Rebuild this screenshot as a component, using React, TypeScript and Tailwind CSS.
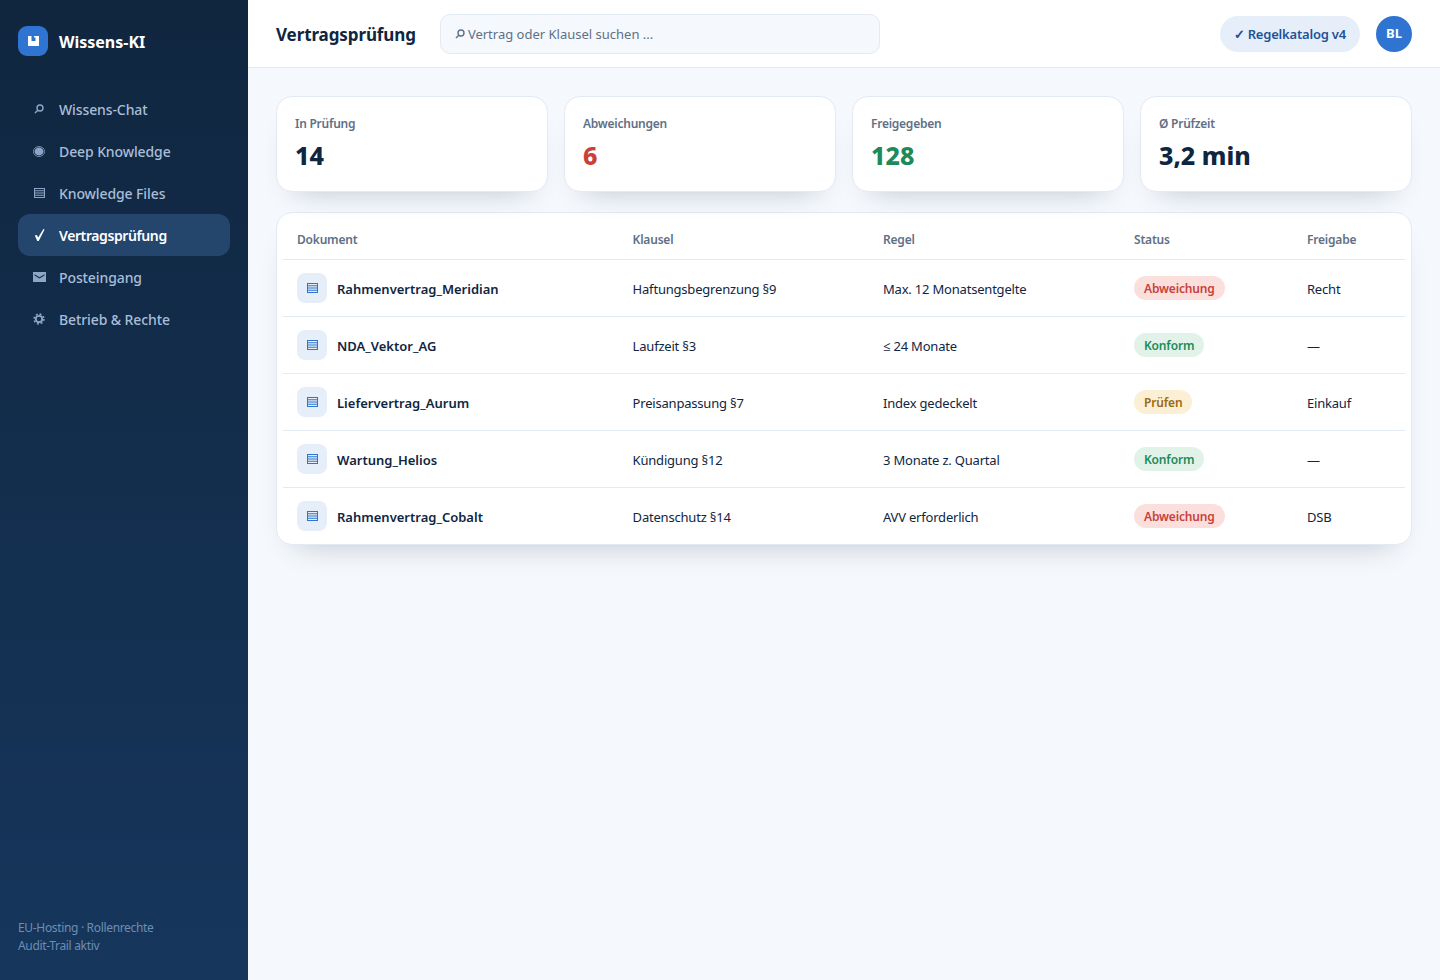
import React from 'react';

// Drawn nav icons, sized to the 12px icon column
const SearchIcon = ({ color }: { color: string }) => (
  <svg width="10" height="10" viewBox="0 0 10 10" fill="none" stroke={color}>
    <circle cx="6" cy="4" r="3" strokeWidth="1.4" />
    <path d="M3.8 6.2 1 9" strokeWidth="1.4" />
  </svg>
);

const DeepIcon = () => (
  <svg width="12" height="11" viewBox="0 0 12 11">
    <ellipse cx="6" cy="5.5" rx="5.6" ry="5" fill="none" stroke="#8ea6c6" strokeWidth="0.8" />
    <ellipse cx="6" cy="5.5" rx="4.4" ry="3.9" fill="#8ea6c6" />
  </svg>
);

const FilesIcon = ({ color, w = 11, h = 10 }: { color: string; w?: number; h?: number }) => (
  <svg width={w} height={h} viewBox="0 0 11 10" fill="none" stroke={color}>
    <rect x="0.5" y="0.5" width="10" height="9" />
    <path d="M0 2.75h11M0 5h11M0 7.25h11" />
  </svg>
);

const CheckIcon = () => (
  <svg width="11" height="12" viewBox="0 0 11 12">
    <path fill="#fff" d="M0.8 6.6 2.8 5.9 4.2 8.6 9.4 0 10.6 0.6 4.7 12H3.3z" />
  </svg>
);

const MailIcon = () => (
  <svg width="13" height="10" viewBox="0 0 13 10">
    <path fill="#8ea6c6" fillRule="evenodd" d="M0 0h13v10H0zM1.5 2.2v1.4l5 3 5-3V2.2l-5 3z" />
  </svg>
);

const GearIcon = () => (
  <svg width="12" height="12" viewBox="0 0 12 12" fill="none" stroke="#8ea6c6">
    <circle cx="6" cy="6" r="3.2" strokeWidth="1.8" />
    <circle cx="6" cy="6" r="4.9" strokeWidth="1.6" strokeDasharray="1.9 1.95" />
  </svg>
);

const navItems = [
  { icon: <SearchIcon color="#8ea6c6" />, label: 'Wissens-Chat' },
  { icon: <DeepIcon />, label: 'Deep Knowledge' },
  { icon: <FilesIcon color="#8ea6c6" />, label: 'Knowledge Files' },
  { icon: <CheckIcon />, label: 'Vertragsprüfung', active: true },
  { icon: <MailIcon />, label: 'Posteingang' },
  { icon: <GearIcon />, label: 'Betrieb & Rechte' },
];

const stats = [
  { label: 'In Prüfung', value: '14', color: 'text-[#10263f]' },
  { label: 'Abweichungen', value: '6', color: 'text-[#c8423a]' },
  { label: 'Freigegeben', value: '128', color: 'text-[#1e8a5a]' },
  { label: 'Ø Prüfzeit', value: '3,2 min', color: 'text-[#10263f]' },
];

type Tone = 'bad' | 'ok' | 'check';

const toneClass: Record<Tone, string> = {
  bad: 'bg-[#fbdfdc] text-[#c8423a]',
  ok: 'bg-[#e1f3e9] text-[#1e8a5a]',
  check: 'bg-[#fbf0d5] text-[#9a6b10]',
};

const rows: { doc: string; clause: string; rule: string; status: string; tone: Tone; owner: string }[] = [
  { doc: 'Rahmenvertrag_Meridian', clause: 'Haftungsbegrenzung §9', rule: 'Max. 12 Monatsentgelte', status: 'Abweichung', tone: 'bad', owner: 'Recht' },
  { doc: 'NDA_Vektor_AG', clause: 'Laufzeit §3', rule: '≤ 24 Monate', status: 'Konform', tone: 'ok', owner: '—' },
  { doc: 'Liefervertrag_Aurum', clause: 'Preisanpassung §7', rule: 'Index gedeckelt', status: 'Prüfen', tone: 'check', owner: 'Einkauf' },
  { doc: 'Wartung_Helios', clause: 'Kündigung §12', rule: '3 Monate z. Quartal', status: 'Konform', tone: 'ok', owner: '—' },
  { doc: 'Rahmenvertrag_Cobalt', clause: 'Datenschutz §14', rule: 'AVV erforderlich', status: 'Abweichung', tone: 'bad', owner: 'DSB' },
];

function Sidebar() {
  return (
    <aside className="w-[248px] shrink-0 flex flex-col bg-gradient-to-b from-[#10263f] to-[#16365c] px-[18px] pt-[26px] pb-[25px]">
      <div className="flex items-center gap-[11px] h-[30px] mb-[32px]">
        <div className="w-[30px] h-[30px] rounded-[9px] bg-[#2f74d0] flex items-center justify-center">
          <svg width="11" height="10" viewBox="0 0 11 10">
            <path fill="#fff" d="M0 0h3.5v5h4V1.5H6V0h5v10H0z" />
          </svg>
        </div>
        <span className="pt-[1px] text-[16px] font-bold text-white">Wissens-KI</span>
      </div>
      <nav className="flex flex-col">
        {navItems.map((item) => (
          <div
            key={item.label}
            className={`flex items-center h-[42px] rounded-[12px] pl-[14px] text-[14px] ${
              item.active ? 'bg-[#24466d] text-white font-semibold tracking-[-0.4px]' : 'text-[#a9bdd8] font-medium tracking-[-0.1px]'
            }`}
          >
            <span className="w-[14px] flex justify-center">{item.icon}</span>
            <span className="ml-[13px]">{item.label}</span>
          </div>
        ))}
      </nav>
      <div className="mt-auto text-[12px] leading-[18px] tracking-[-0.33px] text-[#6f8db3]">
        <div>EU-Hosting · Rollenrechte</div>
        <div>Audit-Trail aktiv</div>
      </div>
    </aside>
  );
}

function Topbar() {
  return (
    <header className="h-[68px] shrink-0 flex items-center bg-white border-b border-[#e3eaf4] px-[28px]">
      <h1 className="pt-[2px] text-[17px] font-bold tracking-[-0.1px] text-[#10263f]">Vertragsprüfung</h1>
      <div className="ml-[24px] w-[440px] h-[40px] flex items-center gap-[3px] rounded-[10px] border border-[#e3eaf4] bg-[#f5f8fc] px-[14px] text-[13px] text-[#5f7086]">
        <SearchIcon color="#5f7086" />
        <span className="pt-[2px]">Vertrag oder Klausel suchen ...</span>
      </div>
      <div className="ml-auto flex items-center gap-[16px]">
        <div className="h-[36px] flex items-center rounded-full bg-[#e6eff9] px-[14px] pt-[2px] text-[13px] font-semibold tracking-[-0.2px] text-[#1f5299]">
          ✓ Regelkatalog v4
        </div>
        <div className="w-[36px] h-[36px] rounded-full bg-[#2f74d0] flex items-center justify-center pt-[1px] text-[13px] font-bold text-white">
          BL
        </div>
      </div>
    </header>
  );
}

function StatCard({ label, value, color }: { label: string; value: string; color: string }) {
  return (
    <div className="h-[96px] rounded-[16px] border border-[#e3eaf4] bg-white px-[18px] pt-[18px] shadow-[0_16px_30px_-20px_rgba(16,38,63,0.3)]">
      <div className="text-[12px] leading-[18px] font-semibold tracking-[-0.25px] text-[#5f7086]">{label}</div>
      <div className={`mt-[5px] text-[25px] leading-[34px] font-extrabold ${color}`}>{value}</div>
    </div>
  );
}

function ContractTable() {
  return (
    <div className="mt-[20px] rounded-[16px] border border-[#e3eaf4] bg-white px-[6px] shadow-[0_16px_30px_-20px_rgba(16,38,63,0.3)]">
      <table className="w-full table-fixed border-collapse text-left">
        <colgroup>
          <col className="w-[335.6px]" />
          <col className="w-[250.4px]" />
          <col className="w-[251px]" />
          <col className="w-[173px]" />
          <col />
        </colgroup>
        <thead>
          <tr className="h-[46px] text-[12px] tracking-[-0.2px] text-[#5f7086]">
            {['Dokument', 'Klausel', 'Regel', 'Status', 'Freigabe'].map((h) => (
              <th key={h} className="pl-[14px] pt-[8px] font-semibold">{h}</th>
            ))}
          </tr>
        </thead>
        <tbody className="text-[13px] tracking-[-0.2px] text-[#10263f]">
          {rows.map((row) => (
            <tr key={row.doc} className="h-[57px] border-t border-[#e3eaf4]">
              <td className="pl-[14px]">
                <div className="flex items-center gap-[10px]">
                  <div className="w-[30px] h-[30px] rounded-[8px] bg-[#e6eff9] flex items-center justify-center">
                    <FilesIcon color="#2f74d0" />
                  </div>
                  <span className="pt-[4px] font-semibold tracking-normal">{row.doc}</span>
                </div>
              </td>
              <td className="pl-[14px] pt-[4px]">{row.clause}</td>
              <td className="pl-[14px] pt-[4px]">{row.rule}</td>
              <td className="pl-[14px]">
                <span className={`inline-flex items-center h-[24px] rounded-full px-[10px] pt-[3px] text-[12px] font-semibold tracking-[-0.15px] ${toneClass[row.tone]}`}>
                  {row.status}
                </span>
              </td>
              <td className="pl-[14px] pt-[4px]">{row.owner}</td>
            </tr>
          ))}
        </tbody>
      </table>
    </div>
  );
}

export default function App() {
  return (
    <div className="flex h-[980px] w-full overflow-hidden bg-[#f5f8fc] font-['Noto_Sans','Open_Sans',sans-serif]">
      <Sidebar />
      <main className="flex-1 min-w-0 flex flex-col">
        <Topbar />
        <div className="px-[28px] pt-[28px]">
          <div className="grid grid-cols-4 gap-[16px]">
            {stats.map((s) => (
              <StatCard key={s.label} {...s} />
            ))}
          </div>
          <ContractTable />
        </div>
      </main>
    </div>
  );
}
